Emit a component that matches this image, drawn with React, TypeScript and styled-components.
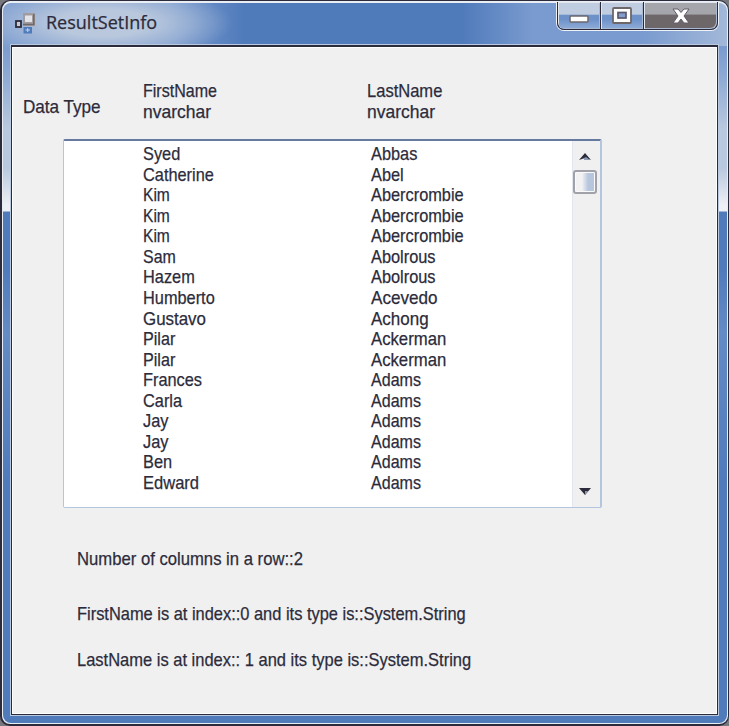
import React from "react";
import styled, { createGlobalStyle } from "styled-components";

const GlobalStyle = createGlobalStyle`
  * { box-sizing: border-box; }
  body { margin: 0; overflow: hidden; background: #77777d; }
`;

const ink = "#2c2b3b";

const WindowFrame = styled.main`
  width: 729px;
  height: 726px;
  display: flex;
  border: solid ${ink};
  border-width: 1px 1px 2px 2px;
  border-radius: 10px;
  background: #e9edf4;
  padding: 2px 1px 1px;
  font-family: "Liberation Sans", Arial, sans-serif;
  color: ${ink};
`;

const Glass = styled.div`
  flex: 1;
  min-width: 0;
  display: flex;
  flex-direction: column;
  border-radius: 8px;
  padding: 0 9px 8px 8px;
  background:
    radial-gradient(ellipse 130px 38px at 100px 20px, #b9c8dd 0 35%, #b9c8dd00 100%),
    linear-gradient(90deg, #7a9bcf 0 165px, #507bbb 240px 460px, #7a9bcf 530px 640px, #a3b8d9 100%) 0 0 / 100% 43px no-repeat,
    linear-gradient(#7a9bcf 43px, #8eabd5 75px, #b8c8de 125px 165px, #edf0f5 202px 208px, #507bbb 209px 265px, #638bc5 330px, #507bbb 480px);
`;

const TitleBar = styled.header`
  height: 42px;
  flex: none;
  display: flex;
  align-items: flex-start;
`;

const AppIcon = styled.svg`
  margin: 9px 0 0 2px;
  flex: none;
`;

const Title = styled.h1`
  margin: 7px 0 0 9px;
  width: 125px;
  font: 400 18px/24px "Open Sans", "Noto Sans", sans-serif;
  white-space: nowrap;
  -webkit-text-stroke: 0.25px ${ink};
`;

const CaptionButtons = styled.div`
  display: flex;
  height: 29px;
  margin: -1px -1px 0 auto;
  border: 1px solid #eef1f7;
  border-top: 0;
  border-radius: 0 0 8px 8px;
`;

const CaptionButton = styled.button<{ $width: number; $dark?: boolean }>`
  width: ${(p) => p.$width}px;
  height: 28px;
  padding: 0;
  display: grid;
  place-items: center;
  border: solid ${ink};
  border-width: 0 1px 1px 0;
  box-shadow: inset 1px 1px #e3e7ef, inset -1px -1px #a9b9d2;
  background: ${(p) =>
    p.$dark
      ? "linear-gradient(#a5a5ac 0 45%, #6e6769 48% 100%)"
      : "linear-gradient(#c0cde1 0 45%, #6d92ca 49% 65%, #91add7 100%)"};

  &:first-child { border-left-width: 1px; border-bottom-left-radius: 7px; padding-top: 7px; }
  &:last-child { border-bottom-right-radius: 7px; }
`;

const Client = styled.section`
  flex: 1;
  min-height: 0;
  display: flex;
  flex-direction: column;
  border: 2px solid ${ink};
  border-width: 2px 1px 1px;
  outline: 1px solid #b9c9e0;
  background: #f0f0f0;
  box-shadow: inset 0 0 0 1px #fff;
  padding: 34px 0 0 11px;
`;

const HeaderRow = styled.div`
  height: 58px;
  display: grid;
  grid-template-columns: 120px 224px 1fr;
`;

const HeaderCell = styled.div<{ $drop?: boolean }>`
  padding-top: ${(p) => (p.$drop ? 16 : 0)}px;
`;

const Line = styled.div<{ $scale?: number }>`
  width: max-content;
  font-size: 19px;
  line-height: 20.56px;
  white-space: pre;
  -webkit-text-stroke: 0.25px ${ink};
  transform: scaleX(${(p) => p.$scale ?? 0.86});
  transform-origin: left;
`;

const ListBox = styled.div`
  width: 539px;
  height: 369px;
  flex: none;
  margin-left: 40px;
  display: flex;
  border: 1px solid #b4c5df;
  border-top: 2px solid #66799f;
  border-right-width: 2px;
  border-radius: 2px;
  background: #fff;
`;

const Records = styled.div`
  flex: 1;
  padding: 3px 0 0 79px;
`;

const Record = styled.div`
  display: grid;
  grid-template-columns: 228px 1fr;
`;

const ScrollBar = styled.div`
  width: 28px;
  display: flex;
  flex-direction: column;
  align-items: center;
  justify-content: space-between;
  background: #f0f0f0;
  border-left: 1px solid #e2e7ef;
  padding: 12px 3px 12px 0;
`;

const ScrollTop = styled.div`
  display: flex;
  flex-direction: column;
  align-items: center;
  gap: 10px;
`;

const Thumb = styled.div`
  width: 24px;
  height: 24px;
  border: 2px solid #a1a1aa;
  border-radius: 3px;
  box-shadow: inset 0 0 0 1px #fafafa;
  background: linear-gradient(90deg, #f2f2f3 35%, #b7c6dd 65%, #b7c6dd);
`;

const Summary = styled.div`
  padding: 41px 0 0 54px;
`;

const SummaryLine = styled(Line)<{ $gap: number }>`
  margin-bottom: ${(p) => p.$gap}px;
`;

type Cell = [text: string, scale?: number];

const records: [Cell, Cell][] = [
  [["Syed"], ["Abbas"]],
  [["Catherine"], ["Abel"]],
  [["Kim", 0.82], ["Abercrombie"]],
  [["Kim", 0.82], ["Abercrombie"]],
  [["Kim", 0.82], ["Abercrombie"]],
  [["Sam", 0.84], ["Abolrous"]],
  [["Hazem"], ["Abolrous"]],
  [["Humberto"], ["Acevedo", 0.9]],
  [["Gustavo", 0.89], ["Achong", 0.895]],
  [["Pilar", 0.85], ["Ackerman", 0.88]],
  [["Pilar", 0.85], ["Ackerman", 0.88]],
  [["Frances"], ["Adams", 0.845]],
  [["Carla"], ["Adams", 0.845]],
  [["Jay"], ["Adams", 0.845]],
  [["Jay"], ["Adams", 0.845]],
  [["Ben"], ["Adams", 0.845]],
  [["Edward", 0.87], ["Adams", 0.845]],
];

function Arrow({ down }: { down?: boolean }) {
  return (
    <svg width="12" height="7" viewBox="0 0 12 7">
      <path d={down ? "M0 0H12L6 7Z" : "M0 7L6 0L12 7L6 5Z"} fill={ink} />
      <path d={down ? "M6 3H9L6 7Z" : "M5 5L7 4L11 7H5Z"} fill="#8d9ab0" />
    </svg>
  );
}

export default function App() {
  return (
    <>
      <GlobalStyle />
      <WindowFrame>
        <Glass>
          <TitleBar>
            <AppIcon width="24" height="24" viewBox="0 0 24 24">
              <rect x="10" y="1" width="12" height="13" fill="#a29c9e" />
              <path d="M10 12.5H20.8V2" fill="none" stroke="#6f686b" strokeWidth="1.5" />
              <rect x="12" y="3.5" width="7" height="6.5" fill="#e2e4e9" />
              <rect x="3" y="9" width="5" height="6" fill="#c7cbd4" stroke={ink} strokeWidth="1.8" />
              <rect x="10.5" y="15" width="8.5" height="6.5" fill="#507bbb" />
              <path d="M12.5 18H17M14.7 16.2V20" stroke="#c7d6ec" />
            </AppIcon>
            <Title>ResultSetInfo</Title>
            <CaptionButtons>
              <CaptionButton $width={44} aria-label="Minimize">
                <svg width="20" height="8" viewBox="0 0 20 8">
                  <rect x="1" y="1" width="18" height="6" rx="1" fill="#fff" stroke="#6e6769" strokeWidth="1.5" />
                </svg>
              </CaptionButton>
              <CaptionButton $width={43} aria-label="Maximize">
                <svg width="20" height="17" viewBox="0 0 20 17">
                  <rect x="1" y="1" width="18" height="15" rx="1" fill="#fff" stroke="#6e6769" strokeWidth="1.8" />
                  <rect x="6" y="5.5" width="8" height="5.5" fill="#819fce" stroke="#5c586b" strokeWidth="1.7" />
                </svg>
              </CaptionButton>
              <CaptionButton $width={74} $dark aria-label="Close">
                <svg width="18" height="16" viewBox="0 0 18 16">
                  <path
                    d="M1 1H6L9 4.5L12 1H17L12 8L17 15H12L9 11L6 15H1L6 8Z"
                    fill="#fff"
                    stroke="#625d69"
                    strokeWidth="1"
                  />
                </svg>
              </CaptionButton>
            </CaptionButtons>
          </TitleBar>
          <Client>
            <HeaderRow>
              <HeaderCell $drop><Line $scale={0.9}>Data Type</Line></HeaderCell>
              <HeaderCell>
                <Line $scale={0.845}>FirstName</Line>
                <Line $scale={0.92}>nvarchar</Line>
              </HeaderCell>
              <HeaderCell>
                <Line $scale={0.87}>LastName</Line>
                <Line $scale={0.92}>nvarchar</Line>
              </HeaderCell>
            </HeaderRow>
            <ListBox>
              <Records>
                {records.map(([first, last], i) => (
                  <Record key={i}>
                    <Line $scale={first[1]}>{first[0]}</Line>
                    <Line $scale={last[1]}>{last[0]}</Line>
                  </Record>
                ))}
              </Records>
              <ScrollBar>
                <ScrollTop>
                  <Arrow />
                  <Thumb />
                </ScrollTop>
                <Arrow down />
              </ScrollBar>
            </ListBox>
            <Summary>
              <SummaryLine $gap={34.5} $scale={0.877}>Number of columns in a row::2</SummaryLine>
              <SummaryLine $gap={25} $scale={0.864}>FirstName is at index::0 and its type is::System.String</SummaryLine>
              <SummaryLine $gap={0} $scale={0.868}>LastName is at index:: 1 and its type is::System.String</SummaryLine>
            </Summary>
          </Client>
        </Glass>
      </WindowFrame>
    </>
  );
}
